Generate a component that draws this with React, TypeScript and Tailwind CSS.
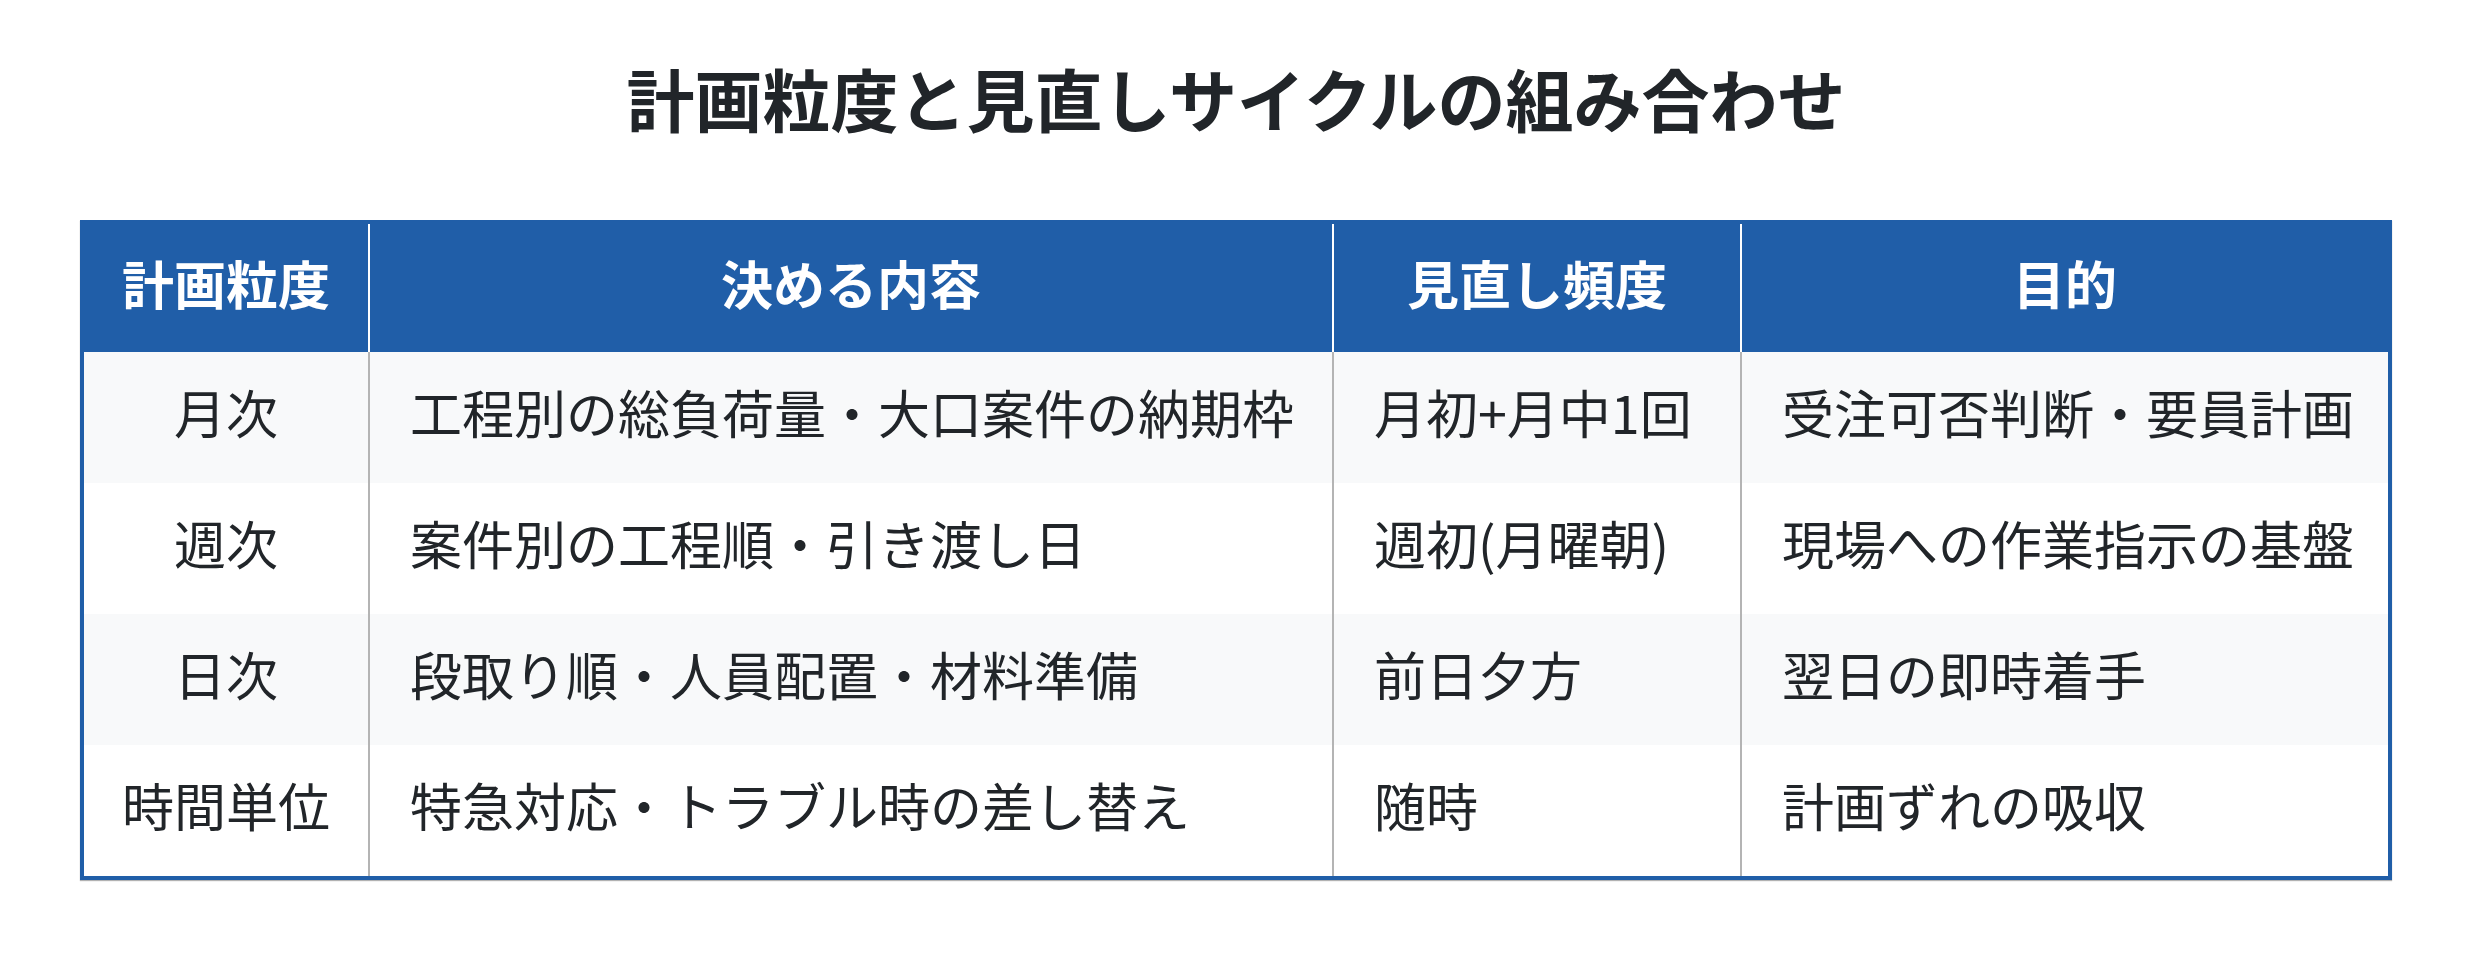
const FONT = '"Noto Sans CJK JP", "Noto Sans", sans-serif';

type Row = { grain: string; content: string; freq: string; purpose: string };

const rows: Row[] = [
    { grain: "月次", content: "工程別の総負荷量・大口案件の納期枠", freq: "月初+月中1回", purpose: "受注可否判断・要員計画" },
    { grain: "週次", content: "案件別の工程順・引き渡し日", freq: "週初(月曜朝)", purpose: "現場への作業指示の基盤" },
    { grain: "日次", content: "段取り順・人員配置・材料準備", freq: "前日夕方", purpose: "翌日の即時着手" },
    { grain: "時間単位", content: "特急対応・トラブル時の差し替え", freq: "随時", purpose: "計画ずれの吸収" },
];

const cols = "grid grid-cols-[284px_964px_408px_1fr]";

export default function App() {
    return (
        <div className="w-[2472px] h-[960px] bg-white px-[80px] pt-[48px] text-[#212529]" style={{ fontFamily: FONT }}>
            <h2 className="text-center text-[68px] leading-[100px] font-bold">計画粒度と見直しサイクルの組み合わせ</h2>

            <div className="mt-[72px] border-4 border-[#205ea8] shadow-[0_1px_1px_rgba(0,0,0,0.3)]">
                <div className={`${cols} h-[128px] bg-[#205ea8] text-white text-[52px] font-bold`}>
                    <div className="flex items-center justify-center pb-[10px]">計画粒度</div>
                    <div className="flex items-center justify-center pb-[10px] border-l-2 border-white">決める内容</div>
                    <div className="flex items-center justify-center pb-[10px] border-l-2 border-white">見直し頻度</div>
                    <div className="flex items-center justify-center pb-[10px] border-l-2 border-white">目的</div>
                </div>

                {rows.map((r, i) => (
                    <div
                        key={r.grain}
                        className={`${cols} h-[131px] text-[52px] ${i % 2 === 0 ? "bg-[#f8f9fa]" : "bg-white"}`}
                    >
                        <div className="flex items-center justify-center pb-[12px]">{r.grain}</div>
                        <div className="flex items-center pl-10 pb-[12px] border-l-2 border-[#b4b4b4] whitespace-nowrap">{r.content}</div>
                        <div className="flex items-center pl-10 pb-[12px] border-l-2 border-[#b4b4b4] whitespace-nowrap">{r.freq}</div>
                        <div className="flex items-center pl-10 pb-[12px] border-l-2 border-[#b4b4b4] whitespace-nowrap">{r.purpose}</div>
                    </div>
                ))}
            </div>
        </div>
    );
}
